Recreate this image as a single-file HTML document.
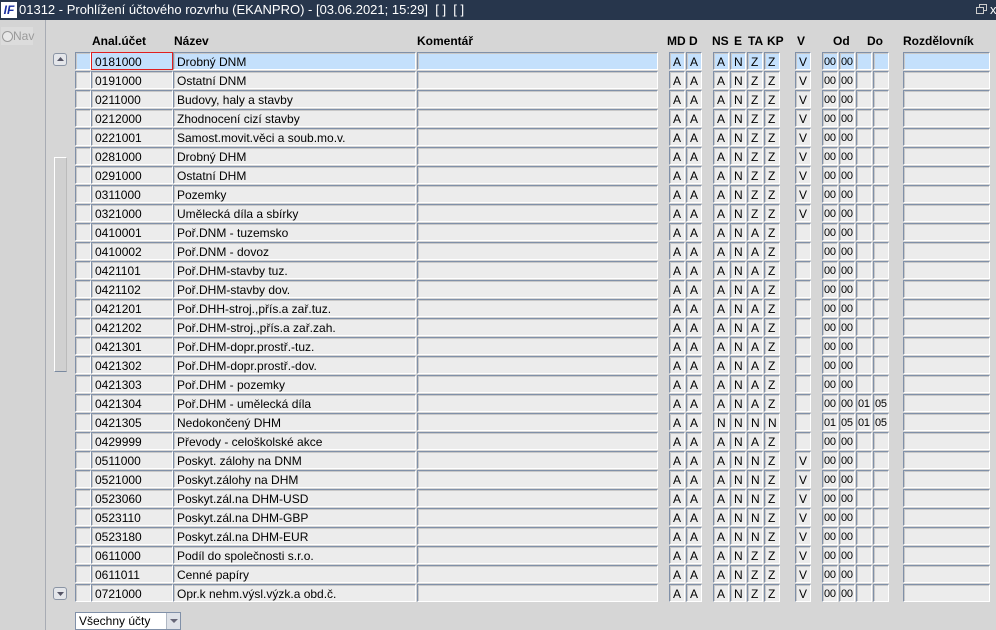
<!DOCTYPE html>
<html><head><meta charset="utf-8"><style>
*{margin:0;padding:0;box-sizing:border-box}
body{width:996px;height:630px;overflow:hidden;background:#d6d6d6;font-family:"Liberation Sans",Arial,sans-serif;font-size:12px;color:#000;position:relative}
.tb{position:absolute;left:0;top:0;width:996px;height:20px;background:#27364c;color:#fff;font-size:13px;line-height:20px}
.tb .lg{position:absolute;left:1px;top:2px;width:16px;height:16px;background:#fff;color:#1a2fa0;font:bold italic 12px/16px "Liberation Sans",sans-serif;text-align:center}
.tb .t{position:absolute;left:19px;top:0}
.lp{position:absolute;left:0;top:20px;width:46px;height:610px;background:#d4d4d4;border-right:1px solid #a8acb4}
.nav{position:absolute;left:1px;top:7px;width:32px;height:18px;background:#dcdcdc;color:#9a9a9a;font-size:12px;line-height:18px;padding-left:12px}
.nav:before{content:"";position:absolute;left:1px;top:4px;width:9px;height:9px;border-radius:50%;border:1px solid #999;background:#e8e8e8}
.h{position:absolute;top:34px;font-weight:bold;font-size:12px}
.r{position:absolute;left:0;width:996px;height:18px}
.r i{font-style:normal;position:absolute;top:0;height:18px;background:#ececec;border:1px solid;border-color:#8090a8 #fff #fff #8090a8;box-shadow:inset 1px 1px 0 #c8c8c8;padding-left:3px;padding-top:1px;line-height:16px;white-space:nowrap;overflow:hidden}
.r.s i{background:#c4e0fc}
.r i:nth-child(1){left:75px;width:16px}
.r i:nth-child(2){left:91px;width:82px}
.r i:nth-child(3){left:173px;width:243px}
.r i:nth-child(4){left:417px;width:241px}
.r i:nth-child(5){left:669px;width:16px}
.r i:nth-child(6){left:686px;width:16px}
.r i:nth-child(7){left:713px;width:16px}
.r i:nth-child(8){left:730px;width:16px}
.r i:nth-child(9){left:747px;width:16px}
.r i:nth-child(10){left:764px;width:16px}
.r i:nth-child(11){left:795px;width:16px}
.r i:nth-child(12){left:822px}
.r i:nth-child(13){left:839px}
.r i:nth-child(14){left:856px}
.r i:nth-child(15){left:873px}
.r i:nth-child(n+12):nth-child(-n+15){width:16px;padding-left:1px;font-size:11px;letter-spacing:-0.3px}
.r i:nth-child(16){left:903px;width:87px}
.r.s i:nth-child(2){border:1px solid #e02020;box-shadow:none}
.btn{position:absolute;left:53px;width:14px;height:13px;border:1px solid #8a94a4;border-radius:3px;background:#e4e6ea}
.btn svg{position:absolute;left:2px;top:2px}
.trk{position:absolute;left:54px;top:157px;width:13px;height:215px;background:#d0d0d0;border-top:1px solid #fff;border-left:1px solid #fff;border-bottom:1px solid #7a8aa0;border-right:1px solid #bbb}
.dd{position:absolute;left:75px;top:612px;width:106px;height:18px;background:#fff;border:1px solid #8090a8;font-size:12px;line-height:17px;padding-left:3px}
.dd b{position:absolute;right:0;top:0;width:14px;height:16px;background:#dfe2e8;border-left:1px solid #b0b8c4}
</style></head><body>
<div class="tb"><span class="lg">IF</span><span class="t">01312 - Prohlížení účtového rozvrhu (EKANPRO) - [03.06.2021; 15:29]&nbsp; [ ]&nbsp; [ ]</span>
<svg style="position:absolute;left:976px;top:4px" width="12" height="11"><rect x="3.5" y="0.5" width="7" height="6" fill="none" stroke="#ccc"/><rect x="0.5" y="3.5" width="7" height="6" fill="#27364c" stroke="#ccc"/></svg>
<span style="position:absolute;left:990px;top:0;color:#fff">x</span></div>
<div class="lp"><div class="nav">Nav</div></div>
<div class="h" style="left:92px">Anal.účet</div>
<div class="h" style="left:174px">Název</div>
<div class="h" style="left:417px">Komentář</div>
<div class="h" style="left:667px">MD</div>
<div class="h" style="left:689px">D</div>
<div class="h" style="left:712px">NS</div>
<div class="h" style="left:734px">E</div>
<div class="h" style="left:748px">TA</div>
<div class="h" style="left:767px">KP</div>
<div class="h" style="left:797px">V</div>
<div class="h" style="left:833px">Od</div>
<div class="h" style="left:867px">Do</div>
<div class="h" style="left:903px">Rozdělovník</div>
<div class="btn" style="top:53px"><svg width="9" height="7"><path d="M1 5L4.5 1L8 5Z" fill="#556"/></svg></div>
<div class="trk"></div>
<div class="btn" style="top:587px"><svg width="9" height="7"><path d="M1 2L4.5 6L8 2Z" fill="#556"/></svg></div>

<div class="r s" style="top:52px"><i></i><i>0181000</i><i>Drobný DNM</i><i></i><i>A</i><i>A</i><i>A</i><i>N</i><i>Z</i><i>Z</i><i>V</i><i>00</i><i>00</i><i></i><i></i><i></i></div>
<div class="r" style="top:71px"><i></i><i>0191000</i><i>Ostatní DNM</i><i></i><i>A</i><i>A</i><i>A</i><i>N</i><i>Z</i><i>Z</i><i>V</i><i>00</i><i>00</i><i></i><i></i><i></i></div>
<div class="r" style="top:90px"><i></i><i>0211000</i><i>Budovy, haly a stavby</i><i></i><i>A</i><i>A</i><i>A</i><i>N</i><i>Z</i><i>Z</i><i>V</i><i>00</i><i>00</i><i></i><i></i><i></i></div>
<div class="r" style="top:109px"><i></i><i>0212000</i><i>Zhodnocení cizí stavby</i><i></i><i>A</i><i>A</i><i>A</i><i>N</i><i>Z</i><i>Z</i><i>V</i><i>00</i><i>00</i><i></i><i></i><i></i></div>
<div class="r" style="top:128px"><i></i><i>0221001</i><i>Samost.movit.věci a soub.mo.v.</i><i></i><i>A</i><i>A</i><i>A</i><i>N</i><i>Z</i><i>Z</i><i>V</i><i>00</i><i>00</i><i></i><i></i><i></i></div>
<div class="r" style="top:147px"><i></i><i>0281000</i><i>Drobný DHM</i><i></i><i>A</i><i>A</i><i>A</i><i>N</i><i>Z</i><i>Z</i><i>V</i><i>00</i><i>00</i><i></i><i></i><i></i></div>
<div class="r" style="top:166px"><i></i><i>0291000</i><i>Ostatní DHM</i><i></i><i>A</i><i>A</i><i>A</i><i>N</i><i>Z</i><i>Z</i><i>V</i><i>00</i><i>00</i><i></i><i></i><i></i></div>
<div class="r" style="top:185px"><i></i><i>0311000</i><i>Pozemky</i><i></i><i>A</i><i>A</i><i>A</i><i>N</i><i>Z</i><i>Z</i><i>V</i><i>00</i><i>00</i><i></i><i></i><i></i></div>
<div class="r" style="top:204px"><i></i><i>0321000</i><i>Umělecká díla a sbírky</i><i></i><i>A</i><i>A</i><i>A</i><i>N</i><i>Z</i><i>Z</i><i>V</i><i>00</i><i>00</i><i></i><i></i><i></i></div>
<div class="r" style="top:223px"><i></i><i>0410001</i><i>Poř.DNM - tuzemsko</i><i></i><i>A</i><i>A</i><i>A</i><i>N</i><i>A</i><i>Z</i><i></i><i>00</i><i>00</i><i></i><i></i><i></i></div>
<div class="r" style="top:242px"><i></i><i>0410002</i><i>Poř.DNM - dovoz</i><i></i><i>A</i><i>A</i><i>A</i><i>N</i><i>A</i><i>Z</i><i></i><i>00</i><i>00</i><i></i><i></i><i></i></div>
<div class="r" style="top:261px"><i></i><i>0421101</i><i>Poř.DHM-stavby tuz.</i><i></i><i>A</i><i>A</i><i>A</i><i>N</i><i>A</i><i>Z</i><i></i><i>00</i><i>00</i><i></i><i></i><i></i></div>
<div class="r" style="top:280px"><i></i><i>0421102</i><i>Poř.DHM-stavby dov.</i><i></i><i>A</i><i>A</i><i>A</i><i>N</i><i>A</i><i>Z</i><i></i><i>00</i><i>00</i><i></i><i></i><i></i></div>
<div class="r" style="top:299px"><i></i><i>0421201</i><i>Poř.DHH-stroj.,přís.a zař.tuz.</i><i></i><i>A</i><i>A</i><i>A</i><i>N</i><i>A</i><i>Z</i><i></i><i>00</i><i>00</i><i></i><i></i><i></i></div>
<div class="r" style="top:318px"><i></i><i>0421202</i><i>Poř.DHM-stroj.,přís.a zař.zah.</i><i></i><i>A</i><i>A</i><i>A</i><i>N</i><i>A</i><i>Z</i><i></i><i>00</i><i>00</i><i></i><i></i><i></i></div>
<div class="r" style="top:337px"><i></i><i>0421301</i><i>Poř.DHM-dopr.prostř.-tuz.</i><i></i><i>A</i><i>A</i><i>A</i><i>N</i><i>A</i><i>Z</i><i></i><i>00</i><i>00</i><i></i><i></i><i></i></div>
<div class="r" style="top:356px"><i></i><i>0421302</i><i>Poř.DHM-dopr.prostř.-dov.</i><i></i><i>A</i><i>A</i><i>A</i><i>N</i><i>A</i><i>Z</i><i></i><i>00</i><i>00</i><i></i><i></i><i></i></div>
<div class="r" style="top:375px"><i></i><i>0421303</i><i>Poř.DHM - pozemky</i><i></i><i>A</i><i>A</i><i>A</i><i>N</i><i>A</i><i>Z</i><i></i><i>00</i><i>00</i><i></i><i></i><i></i></div>
<div class="r" style="top:394px"><i></i><i>0421304</i><i>Poř.DHM - umělecká díla</i><i></i><i>A</i><i>A</i><i>A</i><i>N</i><i>A</i><i>Z</i><i></i><i>00</i><i>00</i><i>01</i><i>05</i><i></i></div>
<div class="r" style="top:413px"><i></i><i>0421305</i><i>Nedokončený DHM</i><i></i><i>A</i><i>A</i><i>N</i><i>N</i><i>N</i><i>N</i><i></i><i>01</i><i>05</i><i>01</i><i>05</i><i></i></div>
<div class="r" style="top:432px"><i></i><i>0429999</i><i>Převody - celoškolské akce</i><i></i><i>A</i><i>A</i><i>A</i><i>N</i><i>A</i><i>Z</i><i></i><i>00</i><i>00</i><i></i><i></i><i></i></div>
<div class="r" style="top:451px"><i></i><i>0511000</i><i>Poskyt. zálohy na DNM</i><i></i><i>A</i><i>A</i><i>A</i><i>N</i><i>N</i><i>Z</i><i>V</i><i>00</i><i>00</i><i></i><i></i><i></i></div>
<div class="r" style="top:470px"><i></i><i>0521000</i><i>Poskyt.zálohy na DHM</i><i></i><i>A</i><i>A</i><i>A</i><i>N</i><i>N</i><i>Z</i><i>V</i><i>00</i><i>00</i><i></i><i></i><i></i></div>
<div class="r" style="top:489px"><i></i><i>0523060</i><i>Poskyt.zál.na DHM-USD</i><i></i><i>A</i><i>A</i><i>A</i><i>N</i><i>N</i><i>Z</i><i>V</i><i>00</i><i>00</i><i></i><i></i><i></i></div>
<div class="r" style="top:508px"><i></i><i>0523110</i><i>Poskyt.zál.na DHM-GBP</i><i></i><i>A</i><i>A</i><i>A</i><i>N</i><i>N</i><i>Z</i><i>V</i><i>00</i><i>00</i><i></i><i></i><i></i></div>
<div class="r" style="top:527px"><i></i><i>0523180</i><i>Poskyt.zál.na DHM-EUR</i><i></i><i>A</i><i>A</i><i>A</i><i>N</i><i>N</i><i>Z</i><i>V</i><i>00</i><i>00</i><i></i><i></i><i></i></div>
<div class="r" style="top:546px"><i></i><i>0611000</i><i>Podíl do společnosti s.r.o.</i><i></i><i>A</i><i>A</i><i>A</i><i>N</i><i>Z</i><i>Z</i><i>V</i><i>00</i><i>00</i><i></i><i></i><i></i></div>
<div class="r" style="top:565px"><i></i><i>0611011</i><i>Cenné papíry</i><i></i><i>A</i><i>A</i><i>A</i><i>N</i><i>Z</i><i>Z</i><i>V</i><i>00</i><i>00</i><i></i><i></i><i></i></div>
<div class="r" style="top:584px"><i></i><i>0721000</i><i>Opr.k nehm.výsl.výzk.a obd.č.</i><i></i><i>A</i><i>A</i><i>A</i><i>N</i><i>Z</i><i>Z</i><i>V</i><i>00</i><i>00</i><i></i><i></i><i></i></div>

<div class="dd">Všechny účty<b><svg style="position:absolute;left:3px;top:6px" width="8" height="5"><path d="M0 0L4 4L8 0Z" fill="#667"/></svg></b></div>
</body></html>
